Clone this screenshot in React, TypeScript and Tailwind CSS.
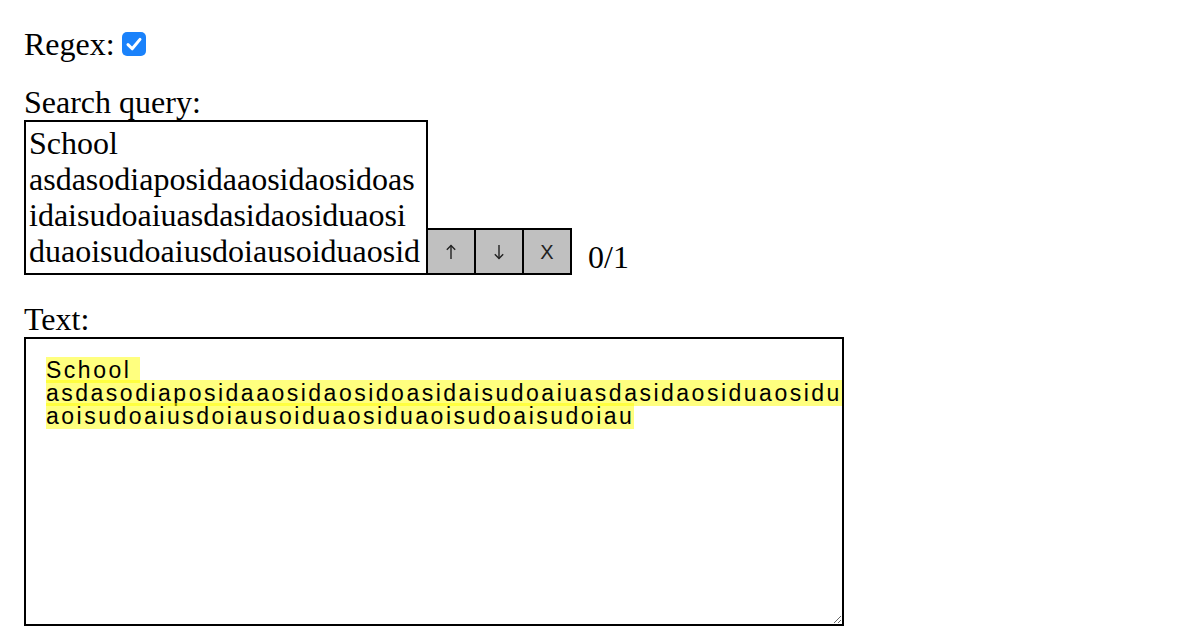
import { useState } from "react";

const QUERY =
  "School\nasdasodiaposidaaosidaosidoasidaisudoaiuasdasidaosiduaosiduaoisudoaiusdoiausoiduaosiduaoisudoaisudoiau";

const TEXT_LINES = [
  "School ",
  "asdasodiaposidaaosidaosidoasidaisudoaiuasdasidaosiduaosidu",
  "aoisudoaiusdoiausoiduaosiduaoisudoaisudoiau",
];

function CheckBox({ checked, onToggle }: { checked: boolean; onToggle: () => void }) {
  return (
    <button
      type="button"
      onClick={onToggle}
      className={
        checked
          ? "ml-[7px] flex h-[24px] w-[24px] items-center justify-center rounded-[5px] bg-[#1a82fb]"
          : "ml-[7px] flex h-[24px] w-[24px] items-center justify-center rounded-[5px] border border-[#888] bg-white"
      }
    >
      {checked && (
        <svg width="24" height="24" viewBox="0 0 24 24" fill="none">
          <path
            d="M6 12.6 L10.2 16.8 L18 7.4"
            stroke="white"
            strokeWidth="3"
            strokeLinecap="round"
            strokeLinejoin="round"
          />
        </svg>
      )}
    </button>
  );
}

function Arrow({ down }: { down?: boolean }) {
  return (
    <svg width="12" height="16" viewBox="0 0 12 16" fill="none" className={down ? "rotate-180" : ""}>
      <path d="M6 1.5 V15" stroke="#222" strokeWidth="1.4" />
      <path d="M1.8 5.8 L6 1.5 L10.2 5.8" stroke="#222" strokeWidth="1.4" />
    </svg>
  );
}

export default function App() {
  const [regex, setRegex] = useState(true);
  const [query, setQuery] = useState(QUERY);

  const btn =
    "-ml-[2px] flex h-[47px] w-[50px] items-center justify-center border-2 border-black bg-[#c0c0c0] font-['Liberation_Sans','DejaVu_Sans',sans-serif] text-[20px] leading-none text-[#222]";

  return (
    <div className="px-6 pt-[26px] font-['Liberation_Serif','Times_New_Roman',serif] text-[32px] leading-[36px] text-black">
      <div className="flex h-[36px] items-center">
        <span>Regex:</span>
        <CheckBox checked={regex} onToggle={() => setRegex(!regex)} />
      </div>

      <div className="mt-[22px]">Search query:</div>
      <div className="flex items-end">
        <textarea
          value={query}
          onChange={(e) => setQuery(e.target.value)}
          className="h-[155px] w-[404px] resize-none overflow-hidden border-2 border-black py-[3px] pl-[3px] pr-[5px] leading-[36px] outline-none"
        />
        <div className="flex">
          <button className={btn}>
            <Arrow />
          </button>
          <button className={btn}>
            <Arrow down />
          </button>
          <button className={btn}>X</button>
        </div>
        <span className="ml-[16px]">0/1</span>
      </div>

      <div className="mt-[26px]">Text:</div>
      <div className="h-[289px] w-[820px] resize overflow-auto border-2 border-black px-[20px] pt-[20px] font-['Liberation_Sans',Arial,sans-serif] text-[23px] leading-[23px] tracking-[2.5px]">
        {TEXT_LINES.map((line, i) => (
          <div key={i} className="whitespace-pre">
            <mark className="bg-[#ffff00]/50 text-black">{line}</mark>
          </div>
        ))}
      </div>
    </div>
  );
}
